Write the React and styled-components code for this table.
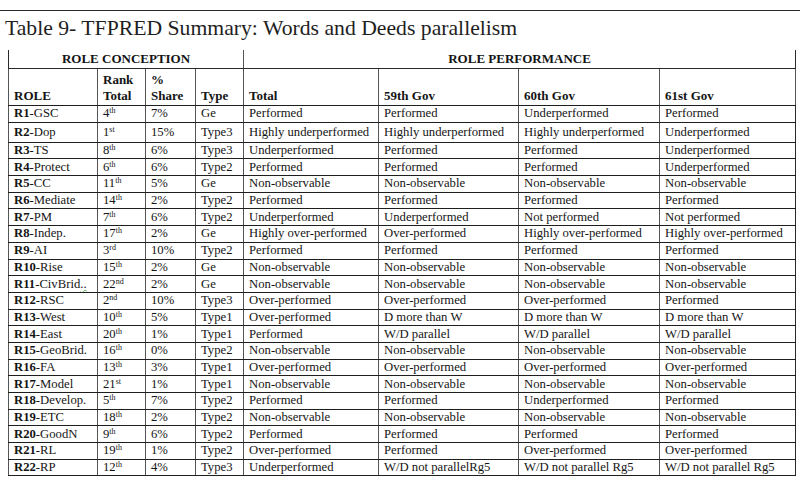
import React from 'react';
import styled, { createGlobalStyle } from 'styled-components';

const rows = [
  ['R1', '-GSC', '4', 'th', '7%', 'Ge', ['Performed', 'Performed', 'Underperformed', 'Performed']],
  ['R2', '-Dop', '1', 'st', '15%', 'Type3', ['Highly underperformed', 'Highly underperformed', 'Highly underperformed', 'Underperformed']],
  ['R3', '-TS', '8', 'th', '6%', 'Type3', ['Underperformed', 'Performed', 'Performed', 'Underperformed']],
  ['R4', '-Protect', '6', 'th', '6%', 'Type2', ['Performed', 'Performed', 'Performed', 'Underperformed']],
  ['R5', '-CC', '11', 'th', '5%', 'Ge', ['Non-observable', 'Non-observable', 'Non-observable', 'Non-observable']],
  ['R6', '-Mediate', '14', 'th', '2%', 'Type2', ['Performed', 'Performed', 'Performed', 'Performed']],
  ['R7', '-PM', '7', 'th', '6%', 'Type2', ['Underperformed', 'Underperformed', 'Not performed', 'Not performed']],
  ['R8', '-Indep.', '17', 'th', '2%', 'Ge', ['Highly over-performed', 'Over-performed', 'Highly over-performed', 'Highly over-performed']],
  ['R9', '-AI', '3', 'rd', '10%', 'Type2', ['Performed', 'Performed', 'Performed', 'Performed']],
  ['R10', '-Rise', '15', 'th', '2%', 'Ge', ['Non-observable', 'Non-observable', 'Non-observable', 'Non-observable']],
  ['R11', '-CivBrid', '22', 'nd', '2%', 'Ge', ['Non-observable', 'Non-observable', 'Non-observable', 'Non-observable']],
  ['R12', '-RSC', '2', 'nd', '10%', 'Type3', ['Over-performed', 'Over-performed', 'Over-performed', 'Performed']],
  ['R13', '-West', '10', 'th', '5%', 'Type1', ['Over-performed', 'D more than W', 'D more than W', 'D more than W']],
  ['R14', '-East', '20', 'th', '1%', 'Type1', ['Performed', 'W/D parallel', 'W/D parallel', 'W/D parallel']],
  ['R15', '-GeoBrid.', '16', 'th', '0%', 'Type2', ['Non-observable', 'Non-observable', 'Non-observable', 'Non-observable']],
  ['R16', '-FA', '13', 'th', '3%', 'Type1', ['Over-performed', 'Over-performed', 'Over-performed', 'Over-performed']],
  ['R17', '-Model', '21', 'st', '1%', 'Type1', ['Non-observable', 'Non-observable', 'Non-observable', 'Non-observable']],
  ['R18', '-Develop.', '5', 'th', '7%', 'Type2', ['Performed', 'Performed', 'Underperformed', 'Performed']],
  ['R19', '-ETC', '18', 'th', '2%', 'Type2', ['Non-observable', 'Non-observable', 'Non-observable', 'Non-observable']],
  ['R20', '-GoodN', '9', 'th', '6%', 'Type2', ['Performed', 'Performed', 'Performed', 'Performed']],
  ['R21', '-RL', '19', 'th', '1%', 'Type2', ['Over-performed', 'Performed', 'Over-performed', 'Over-performed']],
  ['R22', '-RP', '12', 'th', '4%', 'Type3', ['Underperformed', 'W/D not parallelRg5', 'W/D not parallel Rg5', 'W/D not parallel Rg5']],
];

const widths = [89, 48, 50, 48, 135, 140, 141, 136];

const serif = '"Liberation Serif", "Times New Roman", serif';

function App() {
  return (
    <Page>
      <GlobalStyle />
      <Rule />
      <Title>Table 9- TFPRED Summary: Words and Deeds parallelism</Title>
      <Table>
        <colgroup>
          {widths.map((w, i) => (
            <col key={i} style={{ width: w }} />
          ))}
        </colgroup>
        <thead>
          <GroupRow>
            <GroupCell colSpan={4}>ROLE CONCEPTION</GroupCell>
            <GroupCell colSpan={4} $last>ROLE PERFORMANCE</GroupCell>
          </GroupRow>
          <HeadRow>
            <HeadCell>ROLE</HeadCell>
            <HeadCell>Rank<br />Total</HeadCell>
            <HeadCell>%<br />Share</HeadCell>
            <HeadCell>Type</HeadCell>
            <HeadCell>Total</HeadCell>
            <HeadCell>59th Gov</HeadCell>
            <HeadCell>60th Gov</HeadCell>
            <HeadCell>61st Gov</HeadCell>
          </HeadRow>
        </thead>
        <tbody>
          {rows.map(([id, name, rank, suffix, share, type, perf], i) => (
            <BodyRow key={id} $tall={i === 1}>
              <Cell>
                <RoleId>{id}</RoleId>
                {name}
                {id === 'R11' && <Squiggle>..</Squiggle>}
              </Cell>
              <Cell>
                {rank}
                <Sup>{suffix}</Sup>
              </Cell>
              <Cell>{share}</Cell>
              <Cell>{type}</Cell>
              {perf.map((p, j) => (
                <Cell key={j}>{p}</Cell>
              ))}
            </BodyRow>
          ))}
        </tbody>
      </Table>
    </Page>
  );
}

const GlobalStyle = createGlobalStyle`
  html, body {
    margin: 0;
    padding: 0;
    background: #ffffff;
  }
  body {
    font-family: ${serif};
    color: #141414;
  }
`;

const Page = styled.div`
  width: 800px;
  height: 480px;
  padding-top: 10px;
  box-sizing: border-box;
  overflow: hidden;
  font-family: ${serif};
`;

const Rule = styled.div`
  height: 1px;
  background: #2a2a2a;
  width: 100%;
`;

const Title = styled.h1`
  margin: 0;
  padding: 4px 0 0 5px;
  height: 35px;
  font-family: ${serif};
  font-size: 21.7px;
  font-weight: normal;
  line-height: 26px;
  color: #1e1e1e;
`;

const Table = styled.table`
  margin-left: 8px;
  width: 787px;
  table-layout: fixed;
  border-collapse: collapse;
  font-family: ${serif};
  font-size: 12.7px;
  color: #141414;
  border-left: 1px solid #2a2a2a;
  border-right: 1px solid #2a2a2a;
  border-bottom: 1px solid #555;
`;

const GroupRow = styled.tr`
  height: 18px;
`;

const GroupCell = styled.th`
  padding: 0 4px;
  text-align: center;
  font-family: ${serif};
  font-weight: bold;
  font-size: 13px;
  line-height: 15px;
  vertical-align: middle;
  border-bottom: 1px solid #2a2a2a;
  border-left: ${(p) => (p.$last ? '1px solid #555' : 'none')};
`;

const HeadRow = styled.tr`
  height: 37.5px;
`;

const HeadCell = styled.th`
  padding: 0 5px 1px;
  text-align: left;
  vertical-align: bottom;
  font-family: ${serif};
  font-weight: bold;
  font-size: 13px;
  line-height: 16px;
  border: 1px solid #555;
  border-bottom-color: #1e1e1e;
`;

const BodyRow = styled.tr`
  height: ${(p) => (p.$tall ? '20px' : '16.7px')};
`;

const Cell = styled.td`
  padding: 0 5px;
  vertical-align: middle;
  white-space: nowrap;
  overflow: hidden;
  font-family: ${serif};
  font-size: 12.7px;
  line-height: 15px;
  border-left: 1px solid #555;
  border-bottom: 1px solid #1e1e1e;
`;

const RoleId = styled.span`
  font-weight: bold;
`;

const Sup = styled.span`
  font-size: 8px;
  vertical-align: 4px;
  line-height: 0;
`;

const Squiggle = styled.span`
  text-decoration: underline wavy #4caf50;
  text-decoration-thickness: 1px;
`;

export default App;
